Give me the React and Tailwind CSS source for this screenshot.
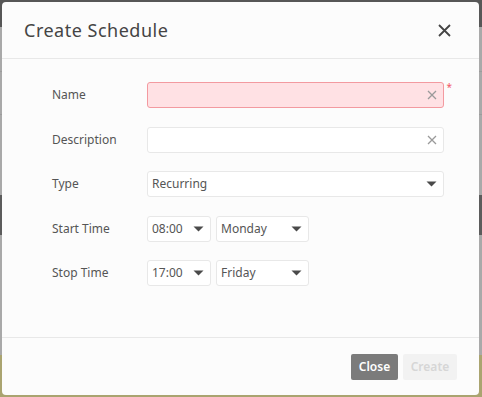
import React from "react";

const font = { fontFamily: '"Noto Sans", "Open Sans", sans-serif' };

const Clear = () => (
  <svg width="10" height="10" viewBox="0 0 10 10" className="text-[#9a9a9a]">
    <path d="M1 1L9 9M9 1L1 9" stroke="currentColor" strokeWidth="1.3" />
  </svg>
);

const Caret = () => (
  <svg width="11" height="6" viewBox="0 0 11 6" className="text-[#4a4a4a]">
    <path d="M0.5 0.5H10.5L5.5 5.5Z" fill="currentColor" />
  </svg>
);

const Select = ({ value, width }) => (
  <div
    className={`flex items-center justify-between h-[26px] pl-[4px] pr-[6px] border border-[#e8e8e8] rounded-[3px] bg-white text-[12px] text-[#555] ${width}`}
  >
    <span>{value}</span>
    <Caret />
  </div>
);

const Row = ({ label, children }) => (
  <div className="flex items-center h-[26px]">
    <div className="w-[95px] text-[12px] text-[#555]">{label}</div>
    {children}
  </div>
);

export default function App() {
  return (
    <div className="relative w-[482px] h-[397px] overflow-hidden bg-[#a9a9a9]" style={font}>
      <div className="h-[27px] bg-[#575757]" />
      <div className="h-[45px] border-b border-[#9c9c9c]" />
      <div className="h-[43px] border-b border-[#9c9c9c]" />
      <div className="h-[80px]" />
      <div className="h-[40px] bg-[#5c5c5c]" />
      <div className="h-[120px]" />
      <div className="h-[42px] bg-[#aaa470]" />

      <div className="absolute left-[2px] top-[2px] w-[477px] h-[393px] bg-[#fcfcfc] rounded-[4px] flex flex-col">
        <div className="flex items-center justify-between h-[57px] pl-[22px] pr-[28px] border-b border-[#e8e8e8]">
          <span className="text-[18px] text-[#444] tracking-[0.5px]">Create Schedule</span>
          <svg width="13" height="13" viewBox="0 0 13 13" className="text-[#444]">
            <path d="M1 1L12 12M12 1L1 12" stroke="currentColor" strokeWidth="1.8" />
          </svg>
        </div>

        <div className="flex-1 flex flex-col gap-[18.5px] pl-[50px] pt-[23px]">
          <Row label="Name">
            <div className="relative">
              <div className="flex items-center justify-end w-[297px] h-[26px] pr-[6px] border border-[#f39aa0] rounded-[3px] bg-[#ffe1e4]">
                <Clear />
              </div>
              <span className="absolute -right-[8px] -top-[2px] text-[10px] text-[#f25a67]">*</span>
            </div>
          </Row>
          <Row label="Description">
            <div className="flex items-center justify-end w-[297px] h-[26px] pr-[6px] border border-[#e8e8e8] rounded-[3px] bg-white">
              <Clear />
            </div>
          </Row>
          <Row label="Type">
            <Select value="Recurring" width="w-[297px]" />
          </Row>
          <Row label="Start Time">
            <div className="flex gap-[5px]">
              <Select value="08:00" width="w-[64px]" />
              <Select value="Monday" width="w-[93px]" />
            </div>
          </Row>
          <Row label="Stop Time">
            <div className="flex gap-[5px]">
              <Select value="17:00" width="w-[64px]" />
              <Select value="Friday" width="w-[93px]" />
            </div>
          </Row>
        </div>

        <div className="flex items-center justify-end gap-[5px] h-[58px] pr-[22px] border-t border-[#e8e8e8]">
          <button className="w-[47px] h-[26px] rounded-[2px] bg-[#7b7b7b] text-white text-[12px] font-semibold">
            Close
          </button>
          <button className="w-[54px] h-[26px] rounded-[2px] bg-[#f2f2f2] text-[#d6d6d6] text-[12px] font-semibold">
            Create
          </button>
        </div>
      </div>
    </div>
  );
}
